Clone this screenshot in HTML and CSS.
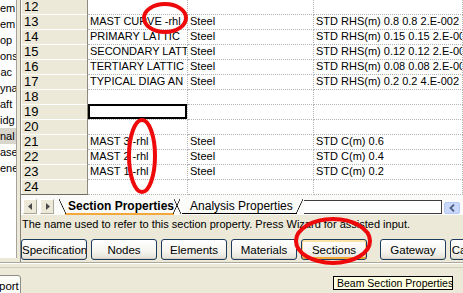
FILE: index.html
```html
<!DOCTYPE html>
<html lang="en">
<head>
    <meta charset="UTF-8">
    <title>Section Properties</title>
    <link rel="stylesheet" href="styles.css">
</head>
<body>
    <div class="workspace">
        <!-- tree panel, scrolled sideways -->
        <ul class="tree">
            <li>em</li>
            <li>em</li>
            <li>op</li>
            <li>ons</li>
            <li>ac</li>
            <li>yna</li>
            <li>aft</li>
            <li>idg</li>
            <li class="current">nal</li>
            <li>ase</li>
            <li>ene</li>
        </ul>

        <div class="editor">
            <div class="sheet">
                <div class="row"><div class="num">12</div><div class="cell"></div><div class="cell"></div><div class="cell"></div></div>
                <div class="row"><div class="num">13</div><div class="cell">MAST CURVE -rhl</div><div class="cell">Steel</div><div class="cell">STD RHS(m) 0.8 0.8 2.E-002 2</div></div>
                <div class="row"><div class="num">14</div><div class="cell">PRIMARY LATTIC</div><div class="cell">Steel</div><div class="cell">STD RHS(m) 0.15 0.15 2.E-002</div></div>
                <div class="row"><div class="num">15</div><div class="cell">SECONDARY LATT</div><div class="cell">Steel</div><div class="cell">STD RHS(m) 0.12 0.12 2.E-002</div></div>
                <div class="row"><div class="num">16</div><div class="cell">TERTIARY LATTIC</div><div class="cell">Steel</div><div class="cell">STD RHS(m) 0.08 0.08 2.E-002</div></div>
                <div class="row"><div class="num">17</div><div class="cell">TYPICAL DIAG AN</div><div class="cell">Steel</div><div class="cell">STD RHS(m) 0.2 0.2 4.E-002 4</div></div>
                <div class="row"><div class="num">18</div><div class="cell"></div><div class="cell"></div><div class="cell"></div></div>
                <div class="row"><div class="num">19</div><div class="cell selected"></div><div class="cell"></div><div class="cell"></div></div>
                <div class="row"><div class="num">20</div><div class="cell"></div><div class="cell"></div><div class="cell"></div></div>
                <div class="row"><div class="num">21</div><div class="cell">MAST 3 -rhl</div><div class="cell">Steel</div><div class="cell">STD C(m) 0.6</div></div>
                <div class="row"><div class="num">22</div><div class="cell">MAST 2 -rhl</div><div class="cell">Steel</div><div class="cell">STD C(m) 0.4</div></div>
                <div class="row"><div class="num">23</div><div class="cell">MAST 1 -rhl</div><div class="cell">Steel</div><div class="cell">STD C(m) 0.2</div></div>
                <div class="row"><div class="num">24</div><div class="cell"></div><div class="cell"></div><div class="cell"></div></div>
            </div>

            <div class="tabs">
                <span class="nav-btn">
                    <svg width="5" height="7" viewBox="0 0 5 7"><path d="M4 0 L0 3.5 L4 7 Z" fill="#4a4a4a"/></svg>
                </span>
                <span class="nav-btn">
                    <svg width="5" height="7" viewBox="0 0 5 7"><path d="M1 0 L5 3.5 L1 7 Z" fill="#4a4a4a"/></svg>
                </span>
                <span class="tab active"><span class="label">Section Properties</span></span>
                <span class="tab second"><span class="label">Analysis Properties</span></span>
                <span class="track"></span>
                <span class="scroll-btn">
                    <svg width="6" height="8" viewBox="0 0 6 8"><path d="M5 0.5 L1.5 4 L5 7.5" fill="none" stroke="#4d6185" stroke-width="1.8"/></svg>
                </span>
            </div>

            <div class="hint">The name used to refer to this section property. Press Wizard for assisted input.</div>

            <div class="toolbar">
                <button class="xp">Specification</button>
                <button class="xp">Nodes</button>
                <button class="xp">Elements</button>
                <button class="xp">Materials</button>
                <button class="xp hover">Sections</button>
                <button class="xp wide-gap">Gateway</button>
                <button class="xp">Calculations</button>
            </div>
        </div>
    </div>

    <div class="footer">
        <button class="port">port</button>
    </div>

    <div class="tooltip">Beam Section Properties</div>

    <!-- red hand-drawn marks -->
    <svg class="marks" width="463" height="293" viewBox="0 0 463 293">
        <ellipse cx="165" cy="18" rx="21" ry="14" fill="none" stroke="#ee0a0a" stroke-width="4"/>
        <ellipse cx="142" cy="156" rx="13" ry="36" fill="none" stroke="#ee0a0a" stroke-width="4"/>
        <ellipse cx="333" cy="241" rx="37" ry="22" fill="none" stroke="#ee0a0a" stroke-width="4"/>
    </svg>
</body>
</html>
```

FILE: styles.css
```css
* {
    box-sizing: border-box;
}

body {
    margin: 0;
    width: 463px;
    height: 293px;
    overflow: hidden;
    position: relative;
    background: #ece9d8;
    font-family: "Liberation Sans", Arial, sans-serif;
    font-size: 11px;
    color: #000;
}

.workspace {
    display: flex;
    height: 262px;
}

/* tree */
.tree {
    width: 17px;
    height: 258px;
    margin: 0;
    padding: 0;
    list-style: none;
    background: #fff;
    border-right: 1px solid #a5a39a;
    overflow: hidden;
}

.tree li {
    height: 16px;
    line-height: 16px;
    padding-right: 4px;
    text-align: right;
    white-space: nowrap;
    overflow: hidden;
}

.tree li.current {
    background: #d8d6cc;
}

.editor {
    flex: 1;
    margin-left: 3px;
    border-left: 1px solid #8a887e;
    display: flex;
    flex-direction: column;
    min-width: 0;
}

/* grid */
.sheet {
    margin-top: -1px;
    height: 196px;
    background: #fff;
    overflow: hidden;
}

.row {
    display: grid;
    grid-template-columns: 67px 100px 126px 1fr;
    height: 15px;
}

.num {
    background: #ece9d8;
    border-right: 1px solid #8c8a80;
    border-bottom: 1px solid #6f6d64;
    box-shadow: inset 1px 1px 0 #fff;
    padding-left: 3px;
    font-size: 13px;
    line-height: 15px;
}

.cell {
    border-right: 1px dotted #b4b4b4;
    border-bottom: 1px dotted #b4b4b4;
    padding-left: 2px;
    line-height: 15px;
    white-space: nowrap;
    overflow: hidden;
}

.cell.selected {
    box-shadow: inset 0 0 0 2px #000;
}

/* sheet tabs */
.tabs {
    height: 20px;
    padding-top: 4px;
    display: flex;
    align-items: flex-start;
    background: #fbfbf9;
}

.nav-btn {
    width: 14px;
    height: 15px;
    margin-left: 2px;
    margin-right: 1px;
    display: flex;
    align-items: center;
    justify-content: center;
    background: #ece9d8;
    border: 1px solid;
    border-color: #fff #aca899 #aca899 #fff;
}

.tab {
    position: relative;
    height: 16px;
    line-height: 14px;
    font-size: 12px;
    white-space: nowrap;
}

.tab::before,
.tab::after {
    content: "";
    position: absolute;
    top: 0;
    bottom: 1px;
    width: 7px;
}

.tab::before {
    left: 0;
    background: linear-gradient(to top right, transparent calc(50% - 0.7px), #000 50%, transparent calc(50% + 0.7px));
}

.tab::after {
    right: 0;
    background: linear-gradient(to top left, transparent calc(50% - 0.7px), #000 50%, transparent calc(50% + 0.7px));
}

.tab.active {
    margin-left: 4px;
    padding: 0 6px 0 9px;
    font-weight: bold;
    z-index: 1;
}

.tab.active .label {
    display: inline-block;
    border-bottom: 2px solid #f3a73d;
    margin-left: -3px;
    padding-left: 3px;
}

.tab.second {
    margin-left: -6px;
    padding: 0 10px 0 16px;
}

.tab.second .label {
    display: inline-block;
    border-bottom: 1px solid #000;
    margin-left: -8px;
    padding-left: 8px;
    margin-right: -4px;
    padding-right: 4px;
}

.track {
    flex: 1;
    height: 14px;
    margin-top: 1px;
    margin-left: 1px;
    background: #fff;
    border: 1px solid #3d3d3d;
    border-left: none;
}

.scroll-btn {
    width: 16px;
    height: 12px;
    margin: 3px 3px 0 2px;
    display: flex;
    align-items: center;
    justify-content: center;
    background: #c9d8fb;
    border: 1px solid #b4c8f6;
    border-radius: 2px;
}

/* status hint */
.hint {
    height: 20px;
    line-height: 18px;
    padding-left: 1px;
    white-space: nowrap;
    overflow: hidden;
}

/* button bar */
.toolbar {
    display: flex;
    gap: 4px;
    padding-top: 4px;
    white-space: nowrap;
}

.xp {
    flex: none;
    width: 66px;
    height: 21px;
    padding: 0;
    font-family: inherit;
    font-size: 11.5px;
    color: #000;
    border: 1px solid #1c3b5d;
    border-radius: 3px;
    background: linear-gradient(#ffffff, #f5f4ee 60%, #e3e0d5);
    box-shadow: inset 0 -1px 0 #d6d0c5;
    overflow: hidden;
}

.xp.hover {
    box-shadow: inset 0 -2px 0 #f0a83a, inset 0 2px 0 #fde3a5, inset 1px 0 0 #fbd68a, inset -1px 0 0 #fbd68a;
}

.xp.wide-gap {
    margin-left: 9px;
}

/* bottom strip */
.footer {
    height: 31px;
    border-top: 1px solid #aca899;
    box-shadow: inset 0 1px 0 #fff;
    position: relative;
}

.footer::before {
    content: "";
    display: block;
    height: 4px;
    border-bottom: 1px solid #d0cdbf;
}

.port {
    position: relative;
    margin: 7px 0 0 -9px;
    width: 30px;
    height: 22px;
    padding: 0 0 0 7px;
    font-family: inherit;
    font-size: 11.5px;
    text-align: left;
    background: #fbfbf8;
    border: 1px solid #8e8c84;
    border-radius: 0 3px 0 0;
}

.tooltip {
    position: absolute;
    left: 333px;
    top: 276px;
    width: 120px;
    height: 14px;
    line-height: 12px;
    padding-left: 3px;
    font-size: 10.5px;
    white-space: nowrap;
    background: #ffffe1;
    border: 1px solid #000;
}

.marks {
    position: absolute;
    left: 0;
    top: 0;
    pointer-events: none;
}
```
